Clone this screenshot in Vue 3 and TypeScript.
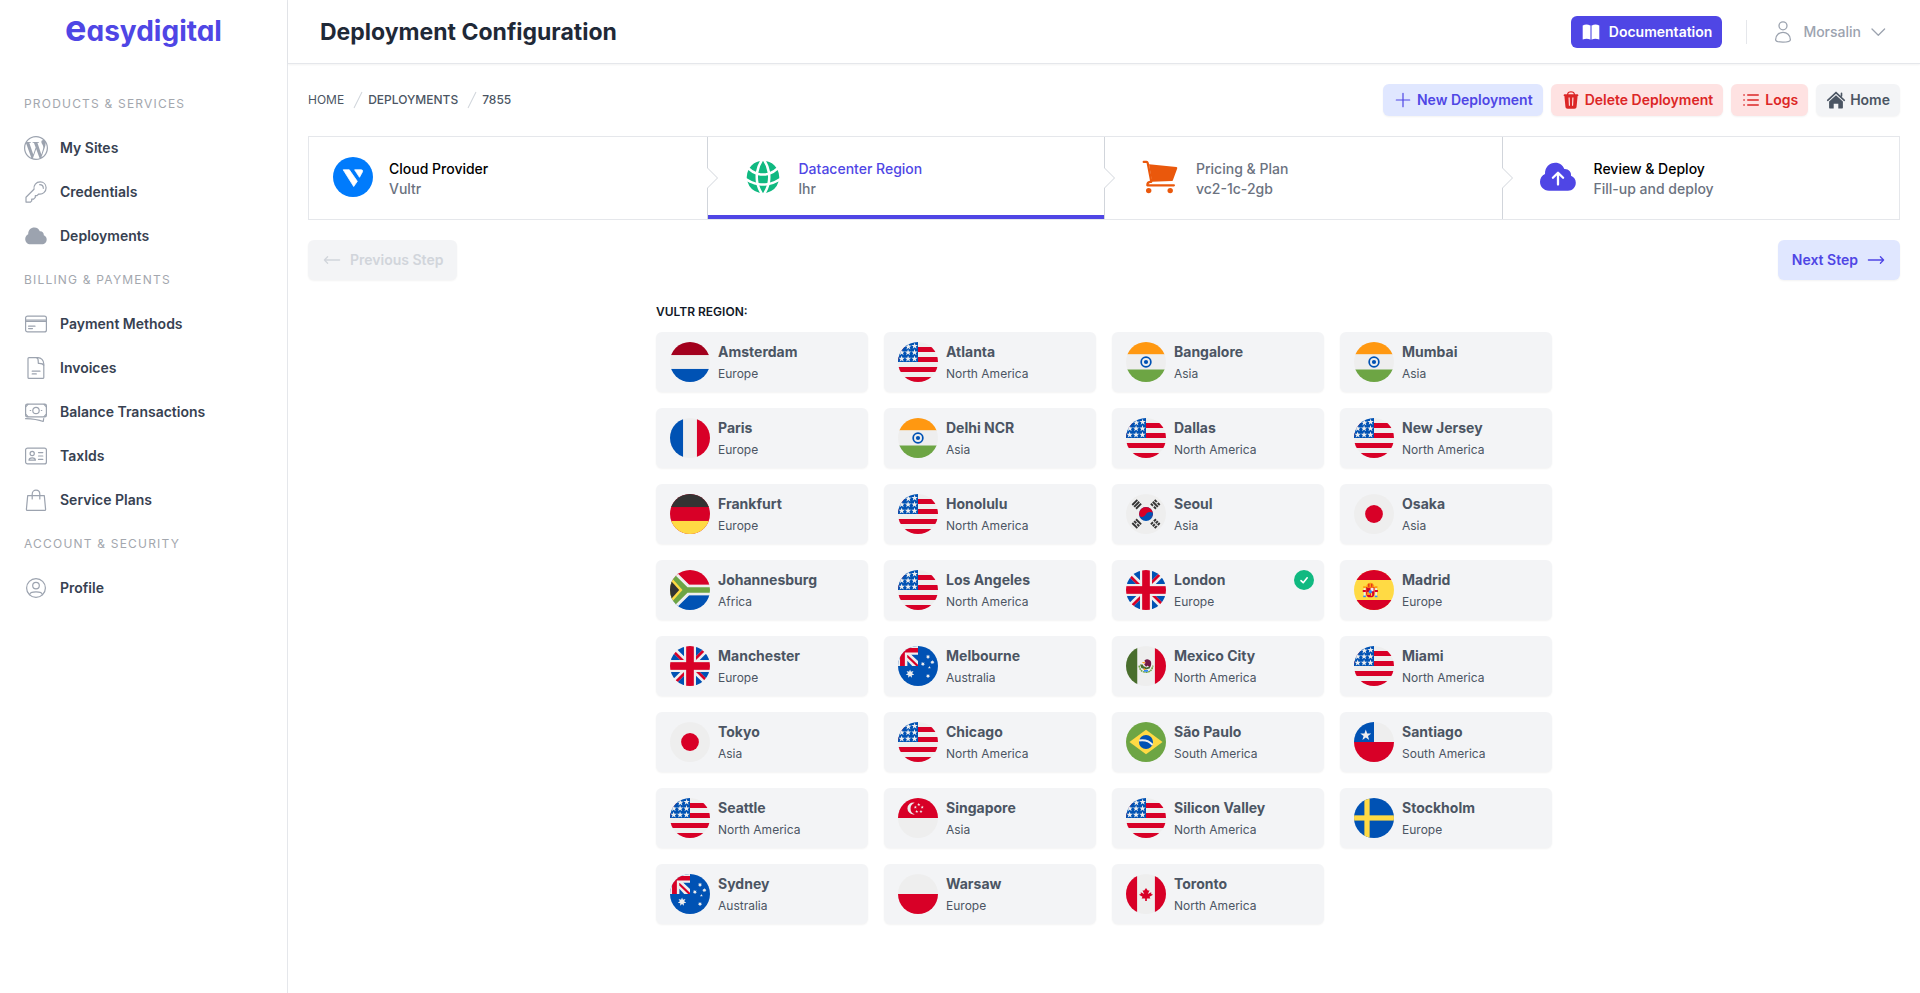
<script setup lang="ts">
import { ref } from 'vue'

interface NavItem { label: string; icon: string }
interface NavGroup { title: string; items: NavItem[] }
interface Step { title: string; detail: string; icon: string; tone: string; active?: boolean }
interface Region { id: string; city: string; continent: string; flag: string }

const line = (body: string, width = 1.2) =>
  `<g fill="none" stroke="currentColor" stroke-width="${width}" stroke-linecap="round" stroke-linejoin="round">${body}</g>`

const cloudShape = 'M11 33.7C5.600 33.700 2 29.600 2 24.800C2 21.200 4 18.300 7 16.900C6.800 10.200 11.500 5.700 17.300 5.700C21.800 5.700 25 8.200 26.300 12C30.600 11.700 33.400 14.800 33 18.700C36.100 19.900 37.800 22.600 37.800 25.700C37.800 30.200 34.300 33.700 30 33.700Z'

const icons: Record<string, string> = {
  wordpress: '<path fill="currentColor" d="M21.469 6.825c.84 1.537 1.318 3.3 1.318 5.175 0 3.979-2.156 7.456-5.363 9.325l3.295-9.527c.615-1.54.82-2.771.82-3.864 0-.405-.026-.78-.07-1.11m-7.981.105c.647-.03 1.232-.105 1.232-.105.582-.075.514-.93-.067-.899 0 0-1.755.135-2.88.135-1.064 0-2.85-.15-2.85-.15-.585-.03-.661.855-.075.885 0 0 .54.061 1.125.09l1.68 4.605-2.37 7.08L5.354 6.9c.649-.03 1.234-.1 1.234-.1.585-.075.516-.93-.065-.896 0 0-1.746.138-2.874.138-.2 0-.438-.008-.69-.015C4.911 3.15 8.235 1.215 12 1.215c2.809 0 5.365 1.072 7.286 2.833-.046-.003-.091-.009-.141-.009-1.06 0-1.812.923-1.812 1.914 0 .89.513 1.643 1.06 2.531.411.72.89 1.643.89 2.977 0 .915-.354 1.994-.821 3.479l-1.075 3.585-3.9-11.61.001.014zM12 22.784c-1.059 0-2.081-.153-3.048-.437l3.237-9.406 3.315 9.087c.024.053.05.101.078.149-1.12.393-2.325.609-3.582.609M1.211 12c0-1.564.336-3.05.935-4.39L7.29 21.709C3.694 19.96 1.212 16.271 1.211 12M12 0C5.385 0 0 5.385 0 12s5.385 12 12 12 12-5.385 12-12S18.615 0 12 0"/>',
  key: line('<path d="M2 17.200L10 9.300C9.300 5.100 12.200 1.900 16.200 1.900C19.600 1.900 22.100 4.400 22.100 7.800C22.100 11.800 18.800 14.700 14.700 14L13 15.700H11.300V17.400L9.600 19.100H7.700V20.900L6.500 22.100H2Z"/><path d="M15.700 4.700C17.700 4.700 19.300 6.300 19.300 8.300"/>'),
  cloud: `<path fill="currentColor" transform="scale(.6)" d="${cloudShape}"/>`,
  card: line('<rect x="1.600" y="4.100" width="20.800" height="15.800" rx="2"/><path d="M1.600 8H22.400M1.600 9.400H22.400M4.600 14.200H11M4.600 16.600H8.500"/>'),
  invoice: line('<path d="M4 2.500C4 1.900 4.400 1.600 5 1.600H14C17 1.600 19.800 4.400 19.800 8V21.400C19.800 22 19.400 22.400 18.800 22.400H5C4.400 22.400 4 22 4 21.400Z"/><path d="M12.500 1.700C14.800 2.100 14.100 5.200 14.300 7.300C16.500 7.200 19 7.200 19.700 9.200M8.200 15.200H16M8.200 17.900H12.300"/>'),
  cash: line('<rect x="1.600" y="4.100" width="20.800" height="12.800" rx="1.600"/><circle cx="12" cy="10.500" r="3.200"/><path d="M6.200 10.500H6.700M17.300 10.500H17.800M1.900 6.600L4 4.400M22.100 6.600L20 4.400M1.900 14.400L4 16.600M22.100 14.400L20 16.600M1.600 18.700C8 18.900 14 19.600 19.200 21.500L19.700 18.700"/>'),
  idcard: line('<rect x="1.600" y="4.100" width="20.800" height="15.800" rx="2"/><circle cx="8.200" cy="9.500" r="2.100"/><path d="M5 16.200C5 13 11.400 13 11.400 16.200ZM14.500 8.600H18.800M14.500 12H18.800M14.500 15.400H18.800"/>'),
  bag: line('<path d="M3.700 7.600H20.300L21.600 21.400C21.600 22 21.300 22.300 20.800 22.300H3.200C2.700 22.300 2.400 22 2.400 21.400ZM8.200 11V6.200C8.200 .8 15.800 .8 15.800 6.200V11"/>'),
  profile: line('<circle cx="12" cy="12" r="9.400"/><circle cx="12" cy="9.600" r="3.300"/><path d="M5.600 18.700C6 14.900 18 14.900 18.400 18.700"/>'),
  user: line('<circle cx="12" cy="5.800" r="4"/><path d="M4.600 19.700C4.600 10 19.400 10 19.400 19.700C19.400 22.900 4.600 22.900 4.600 19.700Z"/>', 1.3),
  chevron: line('<path d="M3 7L9.300 13.300L15.600 7"/>', 1.3),
  book: '<path fill="currentColor" d="M1.700 3.400C4.500 2 7 2.300 9.200 3.400V17.600C7 16.500 4.500 16.500 1.700 17.600ZM10.800 3.400C13 2.300 15.500 2 18.300 3.400V17.600C15.500 16.500 13 16.500 10.800 17.600Z"/><path fill="#a9a5f2" d="M9.200 3.400H10.800V17.600H9.200Z"/>',
  plus: line('<path d="M3.300 10H16.700M10 3.300V16.700"/>'),
  trash: '<path fill="currentColor" d="M2.700 5.200C2.700 4.500 3.200 4.200 3.900 4.200H6C6.200 2.300 7.500 1.300 10 1.300S13.800 2.300 14 4.200H16.100C16.800 4.200 17.300 4.500 17.300 5.200V6H16.600L15.600 16.500C15.500 18 14.700 18.700 13.300 18.700H6.700C5.300 18.700 4.500 18 4.400 16.500L3.400 6H2.700ZM7.200 4.200H12.800C12.600 2.900 11.900 2.400 10 2.400S7.400 2.900 7.200 4.200ZM7.500 7.400L7.900 15.700H9L8.700 7.400ZM11.300 7.400L11 15.700H12.100L12.500 7.400Z" fill-rule="evenodd"/>',
  list: line('<path d="M6.700 5H17.300M6.700 10H17.300M6.700 15H17.300M2.800 5H3.300M2.800 10H3.300M2.800 15H3.300"/>', 1.3),
  home: '<path fill="currentColor" d="M10 5.200L16.900 11.600V17.600C16.900 18.300 16.600 18.600 15.900 18.600H12.300V13.800H7.700V18.600H4.100C3.400 18.600 3.100 18.300 3.100 17.600V11.600Z"/><path d="M1.700 10.300L10 2.600L18.300 10.300M15.500 3.200V6" fill="none" stroke="currentColor" stroke-width="1.600" stroke-linecap="round"/>',
  arrowLeft: line('<path d="M17.600 10H2.400M5.600 6.800L2.400 10L5.600 13.200"/>', 1.3),
  arrowRight: line('<path d="M2.400 10H17.600M14.400 6.800L17.600 10L14.400 13.200"/>', 1.3),
  check: '<path d="M7 10.600L9.200 12.700L13.200 7.800" fill="none" stroke="#fff" stroke-width="1.600" stroke-linecap="round" stroke-linejoin="round"/>',
  vultr: '<circle cx="20" cy="20" r="20" fill="#007bfc"/><path fill="#fff" stroke="#fff" stroke-width=".8" stroke-linejoin="round" d="M10.200 12.800H16.300L24.300 24.300L20.700 29.500ZM21.600 12.800H28.300Q30.200 12.900 29.500 14.800L26.500 20.300Z"/>',
  globe: '<path fill="currentColor" transform="scale(1.66667)" d="M21.721 12.752a9.711 9.711 0 0 0-.945-5.003 12.754 12.754 0 0 1-4.339 2.708 18.991 18.991 0 0 1-.214 4.772 17.165 17.165 0 0 0 5.498-2.477ZM14.634 15.55a17.324 17.324 0 0 0 .332-4.647c-.952.227-1.945.347-2.966.347-1.021 0-2.014-.12-2.966-.347a17.515 17.515 0 0 0 .332 4.647 17.385 17.385 0 0 0 5.268 0ZM9.772 17.119a18.963 18.963 0 0 0 4.456 0A17.182 17.182 0 0 1 12 21.724a17.18 17.18 0 0 1-2.228-4.605ZM7.777 15.23a18.87 18.87 0 0 1-.214-4.774 12.753 12.753 0 0 1-4.34-2.708 9.711 9.711 0 0 0-.944 5.004 17.165 17.165 0 0 0 5.498 2.477ZM21.356 14.752a9.765 9.765 0 0 1-7.478 6.817 18.64 18.64 0 0 0 1.988-4.718 18.627 18.627 0 0 0 5.49-2.098ZM2.644 14.752c1.682.971 3.53 1.688 5.49 2.099a18.64 18.64 0 0 0 1.988 4.718 9.765 9.765 0 0 1-7.478-6.816ZM13.878 2.43a9.755 9.755 0 0 1 6.116 3.986 11.267 11.267 0 0 1-3.746 2.504 18.63 18.63 0 0 0-2.37-6.49ZM12 2.276a17.152 17.152 0 0 1 2.805 7.121c-.897.23-1.837.353-2.805.353-.968 0-1.908-.122-2.805-.353A17.151 17.151 0 0 1 12 2.276ZM10.122 2.43a18.629 18.629 0 0 0-2.37 6.49 11.266 11.266 0 0 1-3.746-2.504 9.754 9.754 0 0 1 6.116-3.985Z"/>',
  cart: '<path fill="currentColor" d="M9 7.300L36.400 10.100Q37.600 10.300 37.200 11.600L32.900 23.200Q32.500 24.100 31.500 24.100L12 24.700Z"/><path fill="none" stroke="currentColor" stroke-width="2.200" stroke-linecap="round" stroke-linejoin="round" d="M3.700 4.900H6.400Q7.400 5 7.700 6L11.300 24.800H10Q7.300 25 7.300 28.300H33.900"/><circle cx="8.700" cy="33.600" r="2.700" fill="currentColor"/><circle cx="30.200" cy="33.600" r="2.700" fill="currentColor"/>',
  upload: `<path fill="currentColor" d="${cloudShape}"/><path d="M20 27.600V15.900M14.900 20.800L20 15.700L25.100 20.800" fill="none" stroke="#fff" stroke-width="2.300" stroke-linecap="round" stroke-linejoin="round"/>`,
}

const W = '#eee', R = '#d80027', B = '#0052b4', Y = '#ffda44', G = '#6da544'

const rect = (x: number, y: number, w: number, h: number, fill: string) =>
  `<rect x="${x}" y="${y}" width="${w}" height="${h}" fill="${fill}"/>`

function star(cx: number, cy: number, r: number, fill = W, points = 5, inner = 0.4): string {
  const pts: string[] = []
  for (let i = 0; i < points * 2; i++) {
    const a = (Math.PI * i) / points - Math.PI / 2
    const d = i % 2 ? r * inner : r
    pts.push(`${(cx + d * Math.cos(a)).toFixed(1)},${(cy + d * Math.sin(a)).toFixed(1)}`)
  }
  return `<polygon points="${pts.join(' ')}" fill="${fill}"/>`
}

const quarter = `<path fill="${B}" d="M132 179L0 47V179ZM179 132L47 0H179Z"/>`
const saltireA = `<path fill="${R}" d="M179 179L66 66L44 92L131 179Z"/>`
const saltireB = `<path fill="${R}" d="M179 333L66 446L92 468L179 381Z"/>`
const turn = (body: string) => `<g transform="rotate(180 256 256)">${body}</g>`
const trigram = (x: number, y: number, angle: number, gaps: string) =>
  `<g transform="translate(${x} ${y}) rotate(${angle})">` +
  [-34, 0, 34].map((dy, i) => rect(-46, dy - 12, 92, 24, '#333') + (gaps[i] === '1' ? rect(-9, dy - 13, 18, 26, W) : '')).join('') + '</g>'

const flags: Record<string, string> = {
  nl: rect(0, 0, 512, 512, W) + rect(0, 0, 512, 167, '#a2001d') + rect(0, 345, 512, 167, B),
  us: rect(0, 0, 512, 512, W) + [64, 192, 320, 448].map(y => rect(0, y, 512, 64, R)).join('') + rect(0, 0, 256, 256, B) +
    [[213, 51], [133, 60], [47, 134], [129, 134], [211, 134], [47, 215], [129, 215], [211, 215]].map(([x, y]) => star(x, y, 43, W)).join(''),
  in: rect(0, 0, 512, 512, W) + rect(0, 0, 512, 156, '#ff9811') + rect(0, 352, 512, 160, G) +
    `<circle cx="256" cy="256" r="62" fill="none" stroke="${B}" stroke-width="22"/><circle cx="256" cy="256" r="27" fill="${B}"/>`,
  fr: rect(0, 0, 512, 512, W) + rect(0, 0, 167, 512, B) + rect(345, 0, 167, 512, R),
  de: rect(0, 0, 512, 512, R) + rect(0, 0, 512, 167, '#333') + rect(0, 345, 512, 167, Y),
  kr: rect(0, 0, 512, 512, W) + `<circle cx="256" cy="256" r="89" fill="${B}"/><path fill="${R}" d="M167 256A89 89 0 0 1 345 256C345 300 270 300 256 256C242 300 167 310 167 256Z"/>` +
    `<path fill="${B}" d="M256 256C270 225 320 222 342 240L345 265C330 290 262 310 256 256Z"/>` +
    trigram(137, 132, -45, '000') + trigram(375, 132, 45, '101') + trigram(137, 380, 45, '010') + trigram(375, 380, -45, '111'),
  jp: rect(0, 0, 512, 512, W) + `<circle cx="256" cy="256" r="114" fill="${R}"/>`,
  za: rect(0, 0, 512, 512, W) + rect(0, 0, 512, 190, R) + rect(0, 322, 512, 190, B) +
    `<path fill="${W}" d="M0 -54L246 190H512V322H246L0 566Z"/><path fill="${G}" d="M0 0L224 222H512V290H224L0 512Z"/>` +
    `<path fill="${Y}" d="M0 78L160 256L0 434Z"/><path fill="#333" d="M0 124L118 256L0 388Z"/>`,
  gb: rect(0, 0, 512, 512, W) + quarter + turn(quarter) + `<g transform="matrix(-1 0 0 1 512 0)">${quarter}</g><g transform="matrix(1 0 0 -1 0 512)">${quarter}</g>` +
    saltireA + turn(saltireA) + saltireB + turn(saltireB) + rect(207, 0, 98, 512, R) + rect(0, 207, 512, 98, R),
  es: rect(0, 0, 512, 512, Y) + rect(0, 0, 512, 128, R) + rect(0, 384, 512, 128, R) +
    rect(124, 230, 22, 110, W) + rect(272, 230, 22, 110, W) + rect(118, 208, 34, 24, '#ff9811') + rect(266, 208, 34, 24, '#ff9811') +
    rect(118, 328, 34, 20, '#338af3') + rect(266, 328, 34, 20, '#338af3') + rect(112, 256, 40, 26, R) + rect(266, 256, 40, 26, R) +
    `<path fill="${R}" d="M156 218H262V300Q262 350 209 350Q156 350 156 300Z"/><path fill="#ff9811" d="M156 212Q166 162 209 162Q252 162 262 212L248 226H170Z"/>` +
    rect(184, 176, 12, 40, R) + rect(222, 176, 12, 40, R) + rect(212, 230, 38, 42, W) + rect(168, 282, 36, 38, '#ff9811') + `<circle cx="209" cy="278" r="22" fill="#338af3"/>` + rect(216, 296, 16, 34, Y),
  mx: rect(0, 0, 512, 512, W) + rect(0, 0, 144, 512, '#496e2d') + rect(370, 0, 142, 512, R) +
    `<path d="M168 250Q180 336 256 336Q332 336 344 250" fill="none" stroke="${G}" stroke-width="20" stroke-dasharray="24 8"/>` +
    `<path fill="#751a46" d="M236 186Q276 152 316 192Q334 240 304 280L280 250L256 264L232 232L250 216Z"/>` +
    `<path fill="#496e2d" d="M180 238H214L226 260L262 276L306 262V284L256 302L196 280Z"/><path fill="#ff9811" d="M200 212L244 200L236 226ZM218 304L240 282L250 310Z"/><path fill="#338af3" d="M230 306H282V328H230Z"/>`,
  br: rect(0, 0, 512, 512, G) + `<path fill="${Y}" d="M256 98L468 256L256 414L44 256Z"/><circle cx="256" cy="256" r="90" fill="${B}"/>` +
    `<path fill="none" stroke="${W}" stroke-width="26" d="M168 236Q282 220 340 294"/>`,
  cl: rect(0, 0, 512, 512, W) + rect(0, 0, 256, 256, B) + rect(0, 256, 512, 256, R) + star(151, 170, 74),
  au: rect(0, 0, 512, 512, B) + rect(0, 0, 256, 256, W) +
    `<path fill="${R}" d="M26 256V112Q44 46 110 26H256V84H88V256Z"/><path fill="${B}" d="M168 112H256V196Z"/><path fill="${W}" d="M118 112H168L256 196V256H118Z"/><path fill="${R}" d="M124 114L256 240V256H232L118 146V114Z"/><path fill="${B}" d="M120 190V256H182Z"/>` +
    star(154, 356, 56, W, 7, 0.5) + star(384, 138, 28, W, 7, 0.5) + star(318, 230, 28, W, 7, 0.5) + star(440, 208, 28, W, 7, 0.5) + star(402, 274, 20) + star(384, 384, 28, W, 7, 0.5),
  sg: rect(0, 0, 512, 512, W) + rect(0, 0, 512, 256, R) +
    `<path fill="${W}" d="M214 60A76 76 0 1 0 214 208A78 78 0 0 1 214 60Z"/>` +
    star(266, 84, 22) + star(222, 118, 22) + star(310, 118, 22) + star(240, 172, 22) + star(294, 172, 22),
  se: rect(0, 0, 512, 512, B) + rect(133, 0, 67, 512, Y) + rect(0, 222, 512, 67, Y),
  pl: rect(0, 0, 512, 512, W) + rect(0, 256, 512, 256, R),
  ca: rect(0, 0, 512, 512, W) + rect(0, 0, 142, 512, R) + rect(370, 0, 142, 512, R) +
    `<path fill="${R}" d="M301 290L346 267L323 256V234L279 256L301 212H279L256 178L233 212H211L233 256L189 234V256L166 267L211 290L200 312H245V346H267V312H312Z"/>`,
}

const navGroups: NavGroup[] = [
  { title: 'Products & Services', items: [
    { label: 'My Sites', icon: 'wordpress' }, { label: 'Credentials', icon: 'key' }, { label: 'Deployments', icon: 'cloud' },
  ] },
  { title: 'Billing & Payments', items: [
    { label: 'Payment Methods', icon: 'card' }, { label: 'Invoices', icon: 'invoice' }, { label: 'Balance Transactions', icon: 'cash' },
    { label: 'TaxIds', icon: 'idcard' }, { label: 'Service Plans', icon: 'bag' },
  ] },
  { title: 'Account & Security', items: [{ label: 'Profile', icon: 'profile' }] },
]

const steps: Step[] = [
  { title: 'Cloud Provider', detail: 'Vultr', icon: 'vultr', tone: 'done' },
  { title: 'Datacenter Region', detail: 'lhr', icon: 'globe', tone: 'current', active: true },
  { title: 'Pricing & Plan', detail: 'vc2-1c-2gb', icon: 'cart', tone: 'pending' },
  { title: 'Review & Deploy', detail: 'Fill-up and deploy', icon: 'upload', tone: 'review' },
]

const NA = 'North America', EU = 'Europe', AS = 'Asia', SA = 'South America', AU = 'Australia'
const regions: Region[] = ([
  ['ams', 'Amsterdam', EU, 'nl'], ['atl', 'Atlanta', NA, 'us'], ['blr', 'Bangalore', AS, 'in'], ['bom', 'Mumbai', AS, 'in'],
  ['cdg', 'Paris', EU, 'fr'], ['del', 'Delhi NCR', AS, 'in'], ['dfw', 'Dallas', NA, 'us'], ['ewr', 'New Jersey', NA, 'us'],
  ['fra', 'Frankfurt', EU, 'de'], ['hnl', 'Honolulu', NA, 'us'], ['icn', 'Seoul', AS, 'kr'], ['itm', 'Osaka', AS, 'jp'],
  ['jnb', 'Johannesburg', 'Africa', 'za'], ['lax', 'Los Angeles', NA, 'us'], ['lhr', 'London', EU, 'gb'], ['mad', 'Madrid', EU, 'es'],
  ['man', 'Manchester', EU, 'gb'], ['mel', 'Melbourne', AU, 'au'], ['mex', 'Mexico City', NA, 'mx'], ['mia', 'Miami', NA, 'us'],
  ['nrt', 'Tokyo', AS, 'jp'], ['ord', 'Chicago', NA, 'us'], ['sao', 'São Paulo', SA, 'br'], ['scl', 'Santiago', SA, 'cl'],
  ['sea', 'Seattle', NA, 'us'], ['sgp', 'Singapore', AS, 'sg'], ['sjc', 'Silicon Valley', NA, 'us'], ['sto', 'Stockholm', EU, 'se'],
  ['syd', 'Sydney', AU, 'au'], ['waw', 'Warsaw', EU, 'pl'], ['yto', 'Toronto', NA, 'ca'],
] as const).map(([id, city, continent, flag]) => ({ id, city, continent, flag }))

const selected = ref('lhr')
</script>

<template>
  <div class="layout">
    <aside class="sidebar">
      <a href="#" class="brand"><span class="brand-initial">e</span>asydigital</a>
      <nav class="nav">
        <section v-for="group in navGroups" :key="group.title">
          <h2 class="nav-title">{{ group.title }}</h2>
          <a v-for="item in group.items" :key="item.label" href="#" class="nav-link">
            <svg class="icon-24" viewBox="0 0 24 24" aria-hidden="true" v-html="icons[item.icon]"></svg>
            {{ item.label }}
          </a>
        </section>
      </nav>
    </aside>

    <div class="main">
      <header class="topbar">
        <h1>Deployment Configuration</h1>
        <div class="topbar-side">
          <a href="#" class="btn btn-primary">
            <svg class="icon-20" viewBox="0 0 20 20" aria-hidden="true" v-html="icons.book"></svg>Documentation
          </a>
          <span class="divider"></span>
          <button type="button" class="user">
            <svg class="icon-24" viewBox="0 0 24 24" aria-hidden="true" v-html="icons.user"></svg>
            <span>Morsalin</span>
            <svg class="icon-20" viewBox="0 0 20 20" aria-hidden="true" v-html="icons.chevron"></svg>
          </button>
        </div>
      </header>

      <main class="content">
        <div class="toolbar">
          <nav class="crumbs" aria-label="Breadcrumb">
            <template v-for="(crumb, i) in ['Home', 'Deployments', '7855']" :key="crumb">
              <svg v-if="i" class="icon-20 slash" viewBox="0 0 20 20" aria-hidden="true"><path fill="currentColor" d="M5.555 17.776l8-16 .894.448-8 16-.894-.448z" /></svg>
              <a href="#" :class="{ first: !i }">{{ crumb }}</a>
            </template>
          </nav>
          <div class="actions">
            <button type="button" class="btn btn-soft"><svg class="icon-20" viewBox="0 0 20 20" aria-hidden="true" v-html="icons.plus"></svg>New Deployment</button>
            <button type="button" class="btn btn-danger"><svg class="icon-20" viewBox="0 0 20 20" aria-hidden="true" v-html="icons.trash"></svg>Delete Deployment</button>
            <button type="button" class="btn btn-danger"><svg class="icon-20" viewBox="0 0 20 20" aria-hidden="true" v-html="icons.list"></svg>Logs</button>
            <a href="#" class="btn btn-plain"><svg class="icon-20" viewBox="0 0 20 20" aria-hidden="true" v-html="icons.home"></svg>Home</a>
          </div>
        </div>

        <ol class="steps">
          <li v-for="(step, i) in steps" :key="step.title" class="step" :class="[step.tone, { active: step.active }]">
            <a href="#" class="step-link">
              <svg class="icon-40" viewBox="0 0 40 40" aria-hidden="true" v-html="icons[step.icon]"></svg>
              <span class="step-text">
                <span class="step-title">{{ step.title }}</span>
                <span class="step-detail">{{ step.detail }}</span>
              </span>
            </a>
            <svg v-if="i" class="step-edge" viewBox="0 0 12 82" fill="none" preserveAspectRatio="none" aria-hidden="true"><path d="M0.5 0V31L10.5 41L0.5 51V82" stroke="currentColor" vector-effect="non-scaling-stroke" /></svg>
          </li>
        </ol>

        <div class="pager">
          <button type="button" class="btn btn-large btn-plain" disabled>
            <svg class="icon-20" viewBox="0 0 20 20" aria-hidden="true" v-html="icons.arrowLeft"></svg>Previous Step
          </button>
          <button type="button" class="btn btn-large btn-soft">
            Next Step<svg class="icon-20" viewBox="0 0 20 20" aria-hidden="true" v-html="icons.arrowRight"></svg>
          </button>
        </div>

        <section class="regions" role="radiogroup" aria-labelledby="region-heading">
          <h2 id="region-heading">Vultr Region:</h2>
          <div class="region-grid">
            <label v-for="region in regions" :key="region.id" class="region">
              <input v-model="selected" type="radio" name="region" :value="region.id" />
              <svg class="flag" viewBox="0 0 512 512" aria-hidden="true" v-html="flags[region.flag]"></svg>
              <span class="region-text">
                <span class="city">{{ region.city }}</span>
                <span class="continent">{{ region.continent }}</span>
              </span>
              <svg v-if="region.id === selected" class="tick" viewBox="0 0 20 20" aria-hidden="true" v-html="icons.check"></svg>
            </label>
          </div>
        </section>
      </main>
    </div>
  </div>
</template>

<style>
body {
  margin: 0;
  background: #fff;
}
</style>

<style scoped>
* {
  box-sizing: border-box;
}

.layout {
  display: grid;
  grid-template-columns: 288px minmax(0, 1fr);
  min-height: 100vh;
  font-family: Inter, "Liberation Sans", sans-serif;
  font-size: 14px;
  line-height: 20px;
  color: #111827;
}

h1,
h2,
ol {
  margin: 0;
  padding: 0;
  list-style: none;
}

a {
  color: inherit;
  text-decoration: none;
}

button {
  font: inherit;
  border: 0;
  cursor: pointer;
}

svg {
  flex: none;
  display: block;
}

.icon-20 { width: 20px; height: 20px; }
.icon-24 { width: 24px; height: 24px; }
.icon-40 { width: 40px; height: 40px; }

.sidebar {
  border-right: 1px solid #e5e7eb;
}

.brand {
  display: flex;
  align-items: baseline;
  justify-content: center;
  height: 64px;
  padding-top: 6px;
  font-size: 28px;
  line-height: 44px;
  font-weight: 700;
  font-feature-settings: "cv11";
  color: #4f46e5;
}

.brand-initial {
  font-size: 36px;
}

.nav {
  padding: 18px 24px;
}

.nav-title {
  display: flex;
  align-items: center;
  height: 44px;
  font-size: 12px;
  font-weight: 400;
  letter-spacing: 0.1em;
  text-transform: uppercase;
  color: #a3a7ae;
}

.nav-link {
  display: flex;
  align-items: center;
  gap: 12px;
  height: 44px;
  font-weight: 600;
  color: #374151;
}

.nav-link svg {
  color: #9ca3af;
}

.topbar {
  display: flex;
  align-items: center;
  justify-content: space-between;
  height: 64px;
  padding: 0 31px 0 32px;
  border-bottom: 1px solid #e5e7eb;
  box-shadow: 0 1px 2px rgba(0, 0, 0, 0.05);
}

h1 {
  font-size: 23px;
  line-height: 32px;
  font-weight: 700;
  color: #1f2937;
}

.topbar-side {
  display: flex;
  align-items: center;
}

.divider {
  width: 1px;
  height: 24px;
  margin: 0 24px;
  background: #e5e7eb;
}

.user {
  display: flex;
  align-items: center;
  gap: 8px;
  padding: 0;
  background: none;
  font-weight: 500;
  color: #9ca3af;
}

.btn {
  display: inline-flex;
  align-items: center;
  gap: 4px;
  height: 32px;
  padding: 0 10px;
  border-radius: 6px;
  font-weight: 600;
  white-space: nowrap;
  box-shadow: 0 1px 2px rgba(0, 0, 0, 0.05);
}

.btn-primary { gap: 8px; background: #4f46e5; color: #fff; box-shadow: none; }
.btn-soft { background: #e0e7ff; color: #4f46e5; }
.btn-danger { background: #fee2e2; color: #dc2626; }
.btn-plain { background: #f3f4f6; color: #4b5563; }
.btn-large { gap: 8px; height: 40px; padding: 0 14px; }
.btn:disabled { color: #d1d5db; cursor: default; }

.content {
  padding: 20px;
}

.toolbar,
.pager {
  display: flex;
  align-items: center;
  justify-content: space-between;
}

.crumbs {
  display: flex;
  align-items: center;
  font-size: 12px;
  line-height: 16px;
  font-weight: 500;
  text-transform: uppercase;
  color: #4b5563;
}

.crumbs .first { font-weight: 400; }

.slash {
  margin-left: 4px;
  color: #d1d5db;
}

.actions {
  display: flex;
  gap: 8px;
}

.steps {
  display: grid;
  grid-template-columns: repeat(4, minmax(0, 1fr));
  margin: 20px 0;
  border: 1px solid #e5e7eb;
}

.step {
  position: relative;
}

.step-link {
  display: flex;
  gap: 16px;
  padding: 20px 24px;
}

.step + .step .step-link {
  padding-left: 36px;
}

.step-text {
  display: flex;
  flex-direction: column;
  padding-top: 2px;
  font-weight: 500;
}

.step-title { color: #000; }
.step-detail { color: #6b7280; }
.current .step-title { color: #4f46e5; }
.pending .step-title { color: #6b7280; }
.current svg { color: #10b981; }
.pending svg { color: #ea580c; }
.review svg { color: #4f46e5; }

.active::after {
  content: "";
  position: absolute;
  inset: auto 0 0;
  height: 4px;
  background: #4f46e5;
}

.step .step-edge {
  position: absolute;
  z-index: 1;
  top: 0;
  left: 0;
  width: 12px;
  height: 100%;
  color: #d1d5db;
}

.regions {
  max-width: 896px;
  margin: 24px auto 0;
}

.regions h2 {
  font-size: 12px;
  line-height: 16px;
  font-weight: 600;
  text-transform: uppercase;
}

.region-grid {
  display: grid;
  grid-template-columns: repeat(4, minmax(0, 1fr));
  gap: 16px;
  margin-top: 12px;
}

.region {
  position: relative;
  display: flex;
  align-items: center;
  gap: 8px;
  padding: 10px 14px;
  border-radius: 6px;
  background: #f3f4f6;
  color: #4b5563;
  box-shadow: 0 1px 2px rgba(0, 0, 0, 0.05);
  cursor: pointer;
}

.region input {
  position: absolute;
  opacity: 0;
  margin: 0;
}

.region:focus-within {
  outline: 2px solid #4f46e5;
}

.flag {
  width: 40px;
  height: 40px;
  border-radius: 50%;
}

.region-text {
  display: flex;
  flex-direction: column;
  gap: 4px;
}

.city {
  font-weight: 700;
}

.continent {
  font-size: 12px;
  line-height: 16px;
}

.tick {
  position: absolute;
  top: 10px;
  right: 10px;
  width: 20px;
  height: 20px;
  border-radius: 50%;
  background: #10b981;
}
</style>
